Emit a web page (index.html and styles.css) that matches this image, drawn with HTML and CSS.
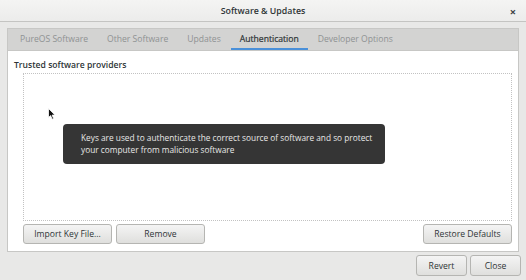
FILE: index.html
```html
<!DOCTYPE html>
<html lang="en">
<head>
    <meta charset="UTF-8" />
    <title>Software &amp; Updates</title>
    <link rel="stylesheet" href="styles.css">
</head>
<body>
    <div class="window">
        <header class="titlebar">
            <span class="title">Software &amp; Updates</span>
            <span class="close">&#215;</span>
        </header>

        <div class="notebook">
            <nav class="tabs">
                <span class="tab">PureOS Software</span>
                <span class="tab">Other Software</span>
                <span class="tab">Updates</span>
                <span class="tab active">Authentication</span>
                <span class="tab">Developer Options</span>
            </nav>
            <div class="page">
                <div class="label">Trusted software providers</div>
                <div class="keylist"></div>
                <div class="row">
                    <button class="btn wide">Import Key File...</button>
                    <button class="btn wide">Remove</button>
                    <span class="spacer"></span>
                    <button class="btn wide">Restore Defaults</button>
                </div>
            </div>
        </div>

        <div class="actions">
            <button class="btn action">Revert</button>
            <button class="btn action">Close</button>
        </div>

        <div class="tooltip">Keys are used to authenticate the correct source of software and so protect your computer from malicious software</div>

        <svg class="cursor" width="8" height="12" viewBox="0 0 8 12">
            <path d="M0.5 0.5 L0.5 9.5 L2.6 7.6 L4.2 11.2 L5.6 10.6 L4.1 7.1 L7 7.1 Z" fill="#111" stroke="#fff" stroke-width="0.8"/>
        </svg>
    </div>
</body>
</html>
```

FILE: styles.css
```css
body {
    margin: 0;
    font-family: 'Open Sans', 'Noto Sans', sans-serif;
    font-size: 8.6px;
    color: #2e3436;
    background-color: #e8e8e7;
}

.window {
    position: relative;
    width: 526px;
    height: 280px;
    overflow: hidden;
    background-color: #e8e8e7;
}

.titlebar {
    height: 21px;
    border-bottom: 1px solid #c4c4c2;
    background: linear-gradient(#f4f4f3, #ececeb);
    display: flex;
    align-items: center;
    justify-content: center;
    position: relative;
}

.title {
    font-weight: 600;
    font-size: 8.8px;
}

.close {
    position: absolute;
    right: 10px;
    top: 4px;
    font-size: 11px;
    font-weight: bold;
    color: #3c4042;
}

.notebook {
    margin: 6px 7px 0 7px;
    border: 1px solid #c7c7c5;
}

.tabs {
    height: 21px;
    background-color: #d3d3d2;
    display: flex;
    padding-left: 3px;
    border-bottom: 1px solid #c7c7c5;
}

.tab {
    padding: 0 9px;
    margin-right: 1px;
    line-height: 20px;
    color: #8f9292;
    border-bottom: 2px solid transparent;
}

.tab.active {
    color: #2e3436;
    font-weight: 500;
    -webkit-text-stroke: 0.2px #2e3436;
    border-bottom-color: #4a90d9;
}

.page {
    background-color: #fff;
    padding: 8px 6px 7px 6px;
}

.label {
    font-weight: 600;
    line-height: 13px;
}

.keylist {
    height: 146px;
    margin: 1px 0 0 9px;
    border: 1px dotted #c2c2c2;
    background-color: #fff;
}

.row {
    display: flex;
    gap: 4px;
    margin: 3px 0 0 9px;
}

.spacer {
    flex: 1;
}

.btn {
    font-family: inherit;
    font-size: 8.6px;
    color: #2e3436;
    background: linear-gradient(#f4f4f4, #dfdfdd);
    border: 1px solid #b5b5b2;
    border-radius: 3px;
    padding: 0;
    height: 20px;
}

.btn.wide {
    width: 89px;
}

.actions {
    display: flex;
    justify-content: flex-end;
    gap: 3px;
    margin: 3px 5px 0 0;
}

.btn.action {
    width: 51px;
    height: 21px;
}

.tooltip {
    position: absolute;
    left: 63px;
    top: 124px;
    width: 304px;
    padding: 8px 0 8px 18px;
    font-size: 8.3px;
    line-height: 12px;
    color: #e8e8e7;
    background-color: #353535;
    border-radius: 4px;
}

.cursor {
    position: absolute;
    left: 48px;
    top: 108px;
}
```
